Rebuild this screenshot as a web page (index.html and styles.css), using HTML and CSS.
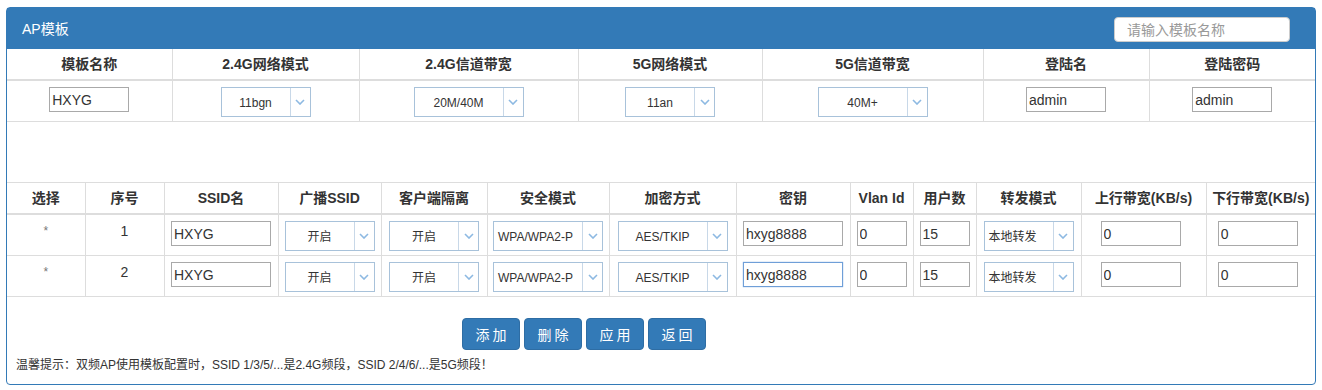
FILE: index.html
```html
<!DOCTYPE html>
<html lang="zh-CN">
<head>
    <meta charset="UTF-8">
    <title>AP模板</title>
    <link rel="stylesheet" href="styles.css">
</head>
<body>
    <div class="panel">
        <div class="panel-heading">
            <span class="panel-title">AP模板</span>
            <input type="text" class="search" placeholder="请输入模板名称">
        </div>
        <table class="grid">
            <colgroup>
                <col style="width:165px"><col style="width:187px"><col style="width:219px"><col style="width:184px">
                <col style="width:221px"><col style="width:166px"><col style="width:166px">
            </colgroup>
            <thead>
                <tr>
                    <th>模板名称</th>
                    <th>2.4G网络模式</th>
                    <th>2.4G信道带宽</th>
                    <th>5G网络模式</th>
                    <th>5G信道带宽</th>
                    <th>登陆名</th>
                    <th>登陆密码</th>
                </tr>
            </thead>
            <tbody>
                <tr>
                    <td><input type="text" class="txt w80" value="HXYG"></td>
                    <td><div class="dropdown w90"><span class="val">11bgn</span><span class="arrow"><svg width="10" height="6" viewBox="0 0 10 6"><path d="M1 1l4 4 4-4" fill="none" stroke="#8db9e2" stroke-width="1.6"/></svg></span></div></td>
                    <td><div class="dropdown w110"><span class="val">20M/40M</span><span class="arrow"><svg width="10" height="6" viewBox="0 0 10 6"><path d="M1 1l4 4 4-4" fill="none" stroke="#8db9e2" stroke-width="1.6"/></svg></span></div></td>
                    <td><div class="dropdown w90"><span class="val">11an</span><span class="arrow"><svg width="10" height="6" viewBox="0 0 10 6"><path d="M1 1l4 4 4-4" fill="none" stroke="#8db9e2" stroke-width="1.6"/></svg></span></div></td>
                    <td><div class="dropdown w110"><span class="val">40M+</span><span class="arrow"><svg width="10" height="6" viewBox="0 0 10 6"><path d="M1 1l4 4 4-4" fill="none" stroke="#8db9e2" stroke-width="1.6"/></svg></span></div></td>
                    <td><input type="text" class="txt w80" value="admin"></td>
                    <td><input type="text" class="txt w80" value="admin"></td>
                </tr>
            </tbody>
        </table>
        <div class="spacer"></div>
        <table class="grid ssid">
            <colgroup>
                <col style="width:78px"><col style="width:79px"><col style="width:114px"><col style="width:103px">
                <col style="width:106px"><col style="width:122px"><col style="width:127px"><col style="width:114px">
                <col style="width:63px"><col style="width:63px"><col style="width:105px"><col style="width:125px">
                <col style="width:109px">
            </colgroup>
            <thead>
                <tr>
                    <th>选择</th>
                    <th>序号</th>
                    <th>SSID名</th>
                    <th>广播SSID</th>
                    <th>客户端隔离</th>
                    <th>安全模式</th>
                    <th>加密方式</th>
                    <th>密钥</th>
                    <th>Vlan Id</th>
                    <th>用户数</th>
                    <th>转发模式</th>
                    <th>上行带宽(KB/s)</th>
                    <th>下行带宽(KB/s)</th>
                </tr>
            </thead>
            <tbody id="ssidBody"></tbody>
        </table>
        <div class="actions">
            <button class="btn">添加</button>
            <button class="btn">删除</button>
            <button class="btn">应用</button>
            <button class="btn">返回</button>
        </div>
        <p class="tip">温馨提示：双频AP使用模板配置时，SSID 1/3/5/...是2.4G频段，SSID 2/4/6/...是5G频段！</p>
    </div>
    <script>
        const arrow = '<span class="arrow"><svg width="10" height="6" viewBox="0 0 10 6"><path d="M1 1l4 4 4-4" fill="none" stroke="#8db9e2" stroke-width="1.6"/></svg></span>';
        function dropdown(value, cls, align) {
            return `<div class="dropdown ${cls}"><span class="val ${align || ''}">${value}</span>${arrow}</div>`;
        }
        const rows = [
            { no: 1, ssid: 'HXYG', key: 'hxyg8888', focus: false },
            { no: 2, ssid: 'HXYG', key: 'hxyg8888', focus: true }
        ];
        document.getElementById('ssidBody').innerHTML = rows.map(row => `
            <tr>
                <td class="star">*</td>
                <td>${row.no}</td>
                <td><input type="text" class="txt w100" value="${row.ssid}"></td>
                <td>${dropdown('开启', 'w90')}</td>
                <td>${dropdown('开启', 'w90')}</td>
                <td>${dropdown('WPA/WPA2-P', 'w110', 'left')}</td>
                <td>${dropdown('AES/TKIP', 'w110')}</td>
                <td><input type="text" class="txt w100${row.focus ? ' focus' : ''}" value="${row.key}"></td>
                <td><input type="text" class="txt w50" value="0"></td>
                <td><input type="text" class="txt w50" value="15"></td>
                <td>${dropdown('本地转发', 'w90', 'left')}</td>
                <td class="bw"><input type="text" class="txt w80" value="0"></td>
                <td class="bw"><input type="text" class="txt w80" value="0"></td>
            </tr>
        `).join('');
    </script>
</body>
</html>
```

FILE: styles.css
```css
body {
    font-family: "Liberation Sans", "Noto Sans CJK SC", sans-serif;
    font-size: 14px;
    color: #333;
    margin: 0;
    padding: 7px 6px;
    background: #fff;
}
.panel {
    width: 1308px;
    border: 1px solid #337ab7;
    border-radius: 4px;
}
.panel-heading {
    height: 41px;
    background-color: #337ab7;
    display: flex;
    align-items: center;
    justify-content: space-between;
    padding: 0 25px 0 15px;
}
.panel-title {
    color: #fff;
    font-size: 14px;
    margin-top: -1px;
}
.search {
    width: 176px;
    height: 25px;
    box-sizing: border-box;
    border: 1px solid #ccc;
    border-radius: 4px;
    padding: 0 12px;
    font-family: inherit;
    font-size: 14px;
    margin-top: 2px;
}
.search::placeholder {
    color: #999;
}
.grid {
    width: 100%;
    border-collapse: collapse;
    table-layout: fixed;
}
.grid th, .grid td {
    border: 1px solid #ddd;
    text-align: center;
    line-height: 20px;
}
.grid tr > :first-child {
    border-left: none;
}
.grid tr > :last-child {
    border-right: none;
}
.grid th {
    font-weight: bold;
    padding: 5px 4px;
    border-top: none;
    border-bottom: 2px solid #ddd;
    white-space: nowrap;
}
.grid td {
    padding: 6px 4px 4px;
    vertical-align: top;
    height: 30px;
}
.grid td.bw {
    padding-right: 10px;
}
.ssid th {
    border-top: 1px solid #ddd;
    padding: 5px 2px;
}
.spacer {
    height: 60px;
}
.star {
    color: #777;
    font-size: 12px;
}
.txt {
    height: 25px;
    box-sizing: border-box;
    border: 1px solid #a9a9a9;
    padding: 0 2px;
    font-family: "Liberation Sans", sans-serif;
    font-size: 14px;
    color: #333;
    display: block;
    margin: 0 auto;
}
.txt.focus {
    border-color: #6f9fd8;
    outline: none;
    box-shadow: 0 0 1px #6f9fd8;
}
.w50 { width: 50px; }
.w80 { width: 80px; }
.w90 { width: 90px; }
.w100 { width: 100px; }
.w110 { width: 110px; }
.dropdown {
    height: 30px;
    box-sizing: border-box;
    border: 1px solid #a8c2da;
    display: flex;
    margin: 0 auto;
    background: #fff;
    font-size: 12px;
}
.dropdown .val {
    flex: 1;
    display: flex;
    align-items: center;
    justify-content: center;
    white-space: nowrap;
    overflow: hidden;
    padding-top: 2px;
}
.dropdown .val.left {
    justify-content: flex-start;
    padding-left: 4px;
}
.dropdown .arrow {
    width: 19px;
    border-left: 1px solid #c8d8e8;
    display: flex;
    align-items: center;
    justify-content: center;
}
.actions {
    display: flex;
    gap: 4px;
    margin: 21px 0 0 455px;
}
.btn {
    width: 58px;
    height: 32px;
    background-color: #337ab7;
    border: 1px solid #2e6da4;
    border-radius: 4px;
    color: #fff;
    font-family: inherit;
    font-size: 14px;
    letter-spacing: 3px;
    padding: 0 0 0 3px;
}
.tip {
    font-size: 12px;
    line-height: 18px;
    margin: 6px 0 0;
    padding: 0 0 10px 9px;
}
```
